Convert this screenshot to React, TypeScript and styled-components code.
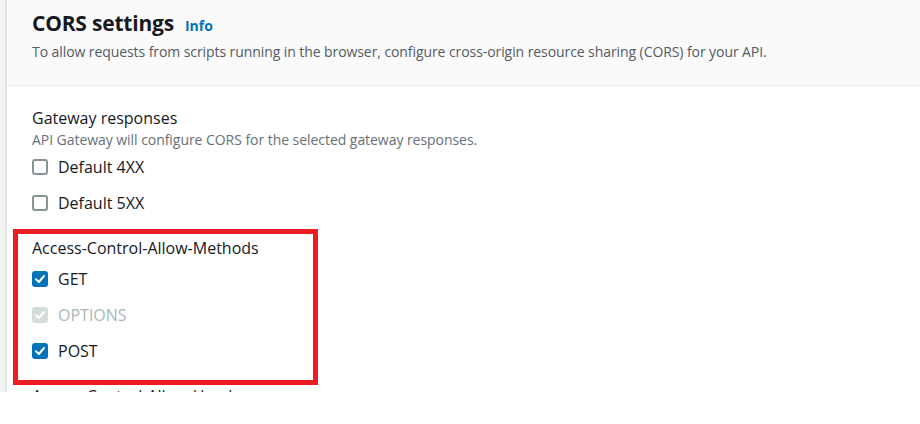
import React from "react";
import styled, { createGlobalStyle } from "styled-components";

const Global = createGlobalStyle`
  html, body { margin: 0; padding: 0; background: #ffffff; }
  body { font-family: "Open Sans", "Noto Sans", Arial, sans-serif; color: #16191f; }
`;

const Page = styled.div`
  display: flex;
  width: 920px;
  height: 392px;
  overflow: hidden;
  background: #ffffff;
`;

const Rail = styled.div`
  width: 5px;
  flex: none;
  background: #f2f3f3;
  border-right: 2px solid #e1e4e4;
`;

const Panel = styled.div`
  flex: 1;
  display: flex;
  flex-direction: column;
  min-width: 0;
`;

const Header = styled.header`
  background: #fafafa;
  border-bottom: 1px solid #eaeded;
  height: 86px;
  box-sizing: border-box;
  padding: 8px 25px 0;
  flex: none;
`;

const TitleRow = styled.div`
  display: flex;
  align-items: baseline;
  gap: 11px;
`;

const Title = styled.h2`
  margin: 0;
  font-size: 21px;
  line-height: 30px;
  font-weight: 700;
  letter-spacing: -0.2px;
  color: #16191f;
`;

const InfoLink = styled.a`
  font-size: 14px;
  font-weight: 700;
  color: #0073bb;
  text-decoration: none;
`;

const Description = styled.p`
  margin: 4px 0 0;
  font-size: 14px;
  line-height: 20px;
  letter-spacing: -0.08px;
  color: #545b64;
`;

const Body = styled.div`
  display: flex;
  flex-direction: column;
  padding: 21px 25px 0;
`;

const Group = styled.div<{ $gap?: number }>`
  position: relative;
  display: flex;
  flex-direction: column;
  margin-top: ${(p) => p.$gap ?? 0}px;
`;

const GroupLabel = styled.div`
  font-size: 16px;
  line-height: 22px;
  color: #16191f;
`;

const GroupHint = styled.div`
  font-size: 14px;
  line-height: 20px;
  letter-spacing: -0.05px;
  color: #687078;
  margin-top: 1px;
`;

const Options = styled.div<{ $top: number }>`
  display: flex;
  flex-direction: column;
  gap: 14px;
  margin-top: ${(p) => p.$top}px;
`;

const Row = styled.label<{ $disabled?: boolean }>`
  display: flex;
  align-items: center;
  gap: 10px;
  height: 22px;
  font-size: 16px;
  color: ${(p) => (p.$disabled ? "#aab7b8" : "#16191f")};
`;

const Box = styled.span<{ $checked?: boolean; $disabled?: boolean }>`
  width: 16px;
  height: 16px;
  box-sizing: border-box;
  border-radius: 3px;
  flex: none;
  display: flex;
  align-items: center;
  justify-content: center;
  background: ${(p) =>
    p.$disabled ? "#d5dbdb" : p.$checked ? "#0073bb" : "#ffffff"};
  border: ${(p) =>
    p.$checked || p.$disabled ? "none" : "2px solid #879596"};
`;

/* Red annotation rectangle drawn over the methods group */
const Highlight = styled.div`
  position: absolute;
  left: -19px;
  top: -8px;
  width: 305px;
  height: 156px;
  box-sizing: border-box;
  border: 5px solid #ed1c24;
  pointer-events: none;
`;

const Check = () => (
  <svg width="12" height="12" viewBox="0 0 12 12">
    <path
      d="M2 6.3 L4.9 9 L10 3"
      fill="none"
      stroke="#ffffff"
      strokeWidth="2"
      strokeLinecap="round"
      strokeLinejoin="round"
    />
  </svg>
);

type Opt = { label: string; checked?: boolean; disabled?: boolean };

const CheckRow = ({ label, checked, disabled }: Opt) => (
  <Row $disabled={disabled}>
    <Box $checked={checked} $disabled={disabled}>
      {(checked || disabled) && <Check />}
    </Box>
    {label}
  </Row>
);

export default function App() {
  const gateway: Opt[] = [{ label: "Default 4XX" }, { label: "Default 5XX" }];
  const methods: Opt[] = [
    { label: "GET", checked: true },
    { label: "OPTIONS", checked: true, disabled: true },
    { label: "POST", checked: true },
  ];
  return (
    <>
      <Global />
      <Page>
        <Rail />
        <Panel>
          <Header>
            <TitleRow>
              <Title>CORS settings</Title>
              <InfoLink href="#">Info</InfoLink>
            </TitleRow>
            <Description>
              To allow requests from scripts running in the browser, configure
              cross-origin resource sharing (CORS) for your API.
            </Description>
          </Header>
          <Body>
            <Group>
              <GroupLabel>Gateway responses</GroupLabel>
              <GroupHint>
                API Gateway will configure CORS for the selected gateway
                responses.
              </GroupHint>
              <Options $top={6}>
                {gateway.map((o) => (
                  <CheckRow key={o.label} {...o} />
                ))}
              </Options>
            </Group>
            <Group $gap={23}>
              <GroupLabel>Access-Control-Allow-Methods</GroupLabel>
              <Options $top={9}>
                {methods.map((o) => (
                  <CheckRow key={o.label} {...o} />
                ))}
              </Options>
              <Highlight />
            </Group>
            <Group $gap={23}>
              <GroupLabel>Access-Control-Allow-Headers</GroupLabel>
            </Group>
          </Body>
        </Panel>
      </Page>
    </>
  );
}
